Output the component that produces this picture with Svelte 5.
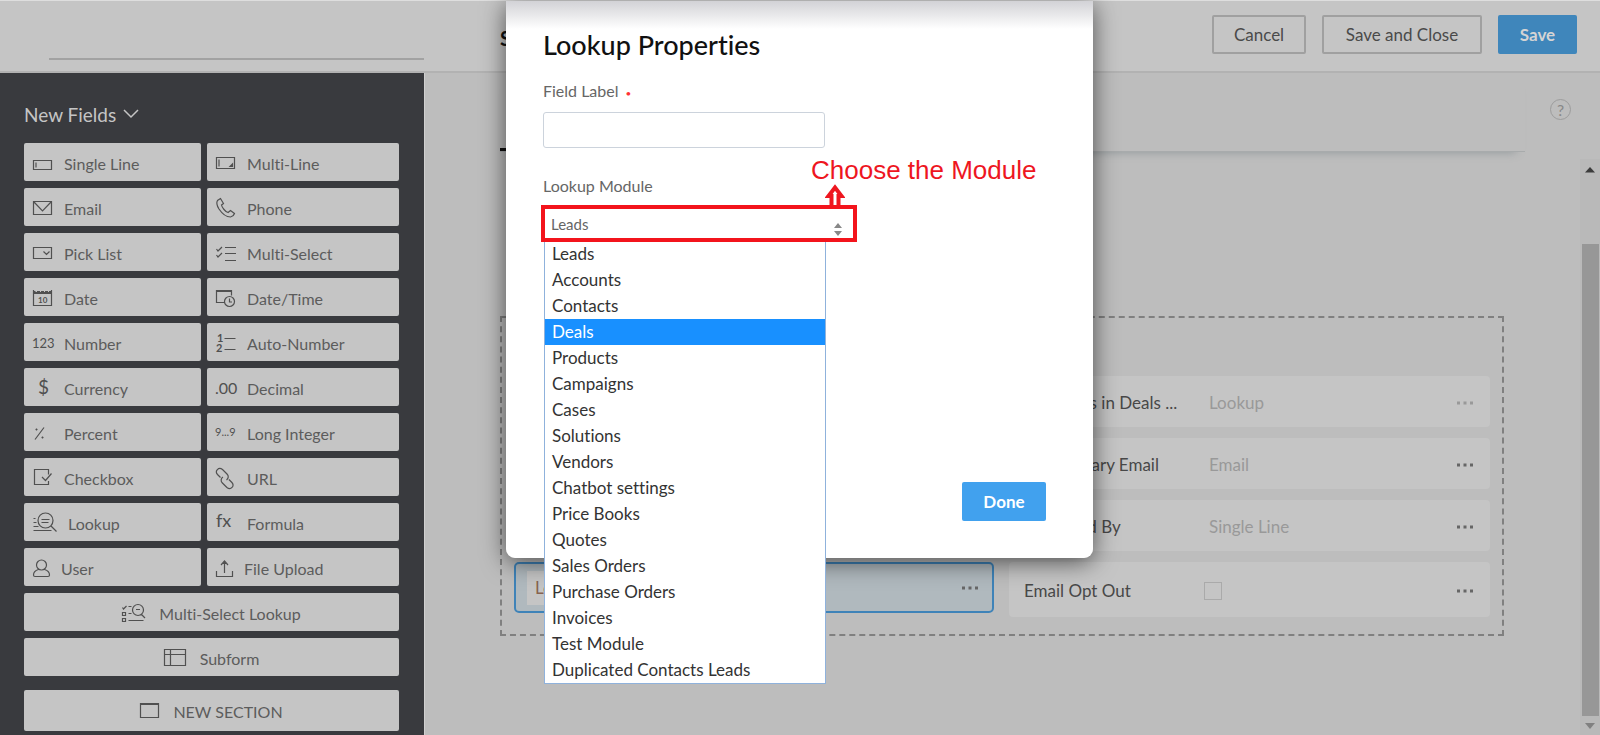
<script>
	const fields = [
		{ label: 'Single Line', icon: 'single' },
		{ label: 'Multi-Line', icon: 'multi' },
		{ label: 'Email', icon: 'email' },
		{ label: 'Phone', icon: 'phone' },
		{ label: 'Pick List', icon: 'pick' },
		{ label: 'Multi-Select', icon: 'multiselect' },
		{ label: 'Date', icon: 'date' },
		{ label: 'Date/Time', icon: 'datetime' },
		{ label: 'Number', icon: 'number' },
		{ label: 'Auto-Number', icon: 'auto' },
		{ label: 'Currency', icon: 'currency' },
		{ label: 'Decimal', icon: 'decimal' },
		{ label: 'Percent', icon: 'percent' },
		{ label: 'Long Integer', icon: 'long' },
		{ label: 'Checkbox', icon: 'checkbox' },
		{ label: 'URL', icon: 'url' },
		{ label: 'Lookup', icon: 'lookup' },
		{ label: 'Formula', icon: 'formula' },
		{ label: 'User', icon: 'user' },
		{ label: 'File Upload', icon: 'upload' }
	];

	const wideFields = [
		{ label: 'Multi-Select Lookup', icon: 'multilookup' },
		{ label: 'Subform', icon: 'subform' }
	];

	// w - width, d - strokes, t - [text, x, y, size]
	const icons = {
		single: { w: 20, d: 'M.5 10.5h18v9h-18z M3 12.5v5' },
		multi: { w: 20, d: 'M.5 7.5h18v11h-18z M3 9.5v7 M16.5 14v2.5h-2.5z' },
		email: { w: 20, d: 'M.5 6.5h18v13h-18z M1 7l8.5 9 8.5-9' },
		phone: { w: 20, d: 'M4.5 3.5L1.5 5.5C.3 7.5.8 10.5 3 14c3 4.5 7.5 8 11.5 8 2-.5 3.5-1.8 4-3.5l-4-3-2.5 2C9.5 17 6 12.5 5.5 10l2-1.5z' },
		pick: { w: 20, d: 'M.5 7.5h18v11h-18z M10.5 11.5l3 3 3-3' },
		multiselect: { w: 20, d: 'M9 7.5h11 M9 13.5h11 M9 20.5h11 M.5 9l1.5 2 4-4 M.5 15l1.5 2 4-4' },
		date: { w: 20, d: 'M.5 5v15.5h18V5 M.5 8.5h18 M1 6.5h1.5 M4 6.5h3 M8 6.5h3 M12 6.5h3 M16 6.5h2 M1 7.5h17', t: [['10', 5, 18, 8]], bold: true },
		datetime: { w: 20, d: 'M8.5 17.5h-8v-12h15v5 M.5 6.5h15 M8.5 16.5a5 5 0 1 0 10 0a5 5 0 1 0-10 0 M13.5 13.5v3.5h2.5' },
		number: { w: 20, t: [['123', -1, 18, 13]] },
		auto: { w: 20, d: 'M8.5 8.5h11 M8.5 19.5h11', t: [['1', 1, 12, 11], ['2', 0, 22, 11]], bold: true },
		currency: { w: 20, t: [['$', 5, 19, 19]] },
		decimal: { w: 20, t: [['.00', -1, 19, 16]] },
		percent: { w: 20, d: 'M2 19.5l9-12 M2.5 9.5h2 M3.5 8.5v2 M8.5 17.5h2 M9.5 16.5v2' },
		long: { w: 20, t: [['9...9', -1, 16, 11]] },
		checkbox: { w: 20, d: 'M15.5 16v3.5h-14v-15h14v5 M9 12l3.5 3.5 6-7' },
		url: { w: 20, d: 'M4.5 12.5l-3-3C-1.5 6 2.5 1.5 6.5 4.5l4.5 4.5c2 2 1.5 4.5-.5 6 M12.9 14.5l3 3c3 3.5-1 8-5 5l-4.5-4.5c-2-2-1.5-4.5.5-6' },
		lookup: { w: 24, d: 'M5 10.5a7.5 7.5 0 1 0 15 0a7.5 7.5 0 1 0-15 0 M18 16l5.5 5.5 M8.5 9.5h8 M8.5 12.5h7 M.5 8.5h2 M.5 12.5h3 M.5 16.5h5 M.5 20.5h18' },
		formula: { w: 20, t: [['fx', 0, 17, 18]] },
		user: { w: 17, d: 'M3.5 10a5 5 0 1 0 10 0a5 5 0 1 0-10 0 M5.5 14.5c-3.5 1-5 3-5 5.5q0 1.5 1.5 1.5h13q1.5 0 1.5-1.5c0-2.5-1.5-4.5-5-5.5' },
		upload: { w: 17, d: 'M.5 16v5.5h16V16 M8.5 18V7 M5 10l3.5-4 3.5 4 M7 8.5h3' },
		multilookup: { w: 23, d: 'M10.5 10a5.5 5.5 0 1 0 11 0a5.5 5.5 0 1 0-11 0 M19 14l4 4 M14 9.5h4 M.5 7.5l1 1.5 3-3 M6.5 6.5h3 M.5 12.5h3v3h-3z M6.5 13.5h3 M.5 18.5h3v3h-3z M6.5 20.5h15' },
		subform: { w: 22, d: 'M.5 4.5h21v16H.5z M.5 9.5h21 M6.5 4.5v16' },
		section: { w: 19, d: 'M.5 4.5h18v14H.5z M.5 5.5h18' }
	};

	const rows = [
		{ label: 'Prospects in Deals ...', value: 'Lookup', faded: true },
		{ label: '2nd Primary Email', value: 'Email' },
		{ label: 'Approved By', value: 'Single Line' },
		{ label: 'Email Opt Out', check: true }
	];

	const modules = [
		'Leads', 'Accounts', 'Contacts', 'Deals', 'Products', 'Campaigns',
		'Cases', 'Solutions', 'Vendors', 'Chatbot settings', 'Price Books',
		'Quotes', 'Sales Orders', 'Purchase Orders', 'Invoices',
		'Test Module', 'Duplicated Contacts Leads'
	];

	let fieldLabel = $state('');
	let selected = $state('Leads');
	let hovered = $state('Deals');
</script>

{#snippet icon(name)}
	{@const i = icons[name]}
	<svg class="icon" class:bold={i.bold} width={i.w} height="24" viewBox="0 0 {i.w} 24" aria-hidden="true">
		{#if i.d}<path d={i.d} />{/if}
		{#each i.t ?? [] as [text, x, y, size]}
			<text {x} {y} font-size={size}>{text}</text>
		{/each}
	</svg>
{/snippet}

{#snippet dots()}
	<svg width="18" height="4" viewBox="0 0 18 4" aria-hidden="true">
		<path d="M1 .5h3v3H1z M7.5 .5h3v3h-3z M14 .5h3v3h-3z" />
	</svg>
{/snippet}

<div class="page">
	<header>
		<div class="name"></div>
		<h1>Set</h1>
		<div class="actions">
			<button>Cancel</button>
			<button class="wide">Save and Close</button>
			<button class="save">Save</button>
		</div>
	</header>

	<div class="body">
		<aside>
			<button class="toggle">
				New Fields
				<svg width="16" height="10" viewBox="0 0 16 10"><path d="M1 1l7 7 7-7" /></svg>
			</button>
			<div class="fields">
				{#each fields as f}
					<button class="field">{@render icon(f.icon)}<span>{f.label}</span></button>
				{/each}
				{#each wideFields as f}
					<button class="field full">{@render icon(f.icon)}<span>{f.label}</span></button>
				{/each}
			</div>
			<button class="field full section">{@render icon('section')}<span>NEW SECTION</span></button>
		</aside>

		<main>
			<div class="top">
				<div class="tabs"><span class="tab"></span></div>
				<button class="help" aria-label="Help">?</button>
			</div>
			<div class="canvas">
				<div class="layout">
					<div class="card active">
						<input class="edit" aria-label="Field name" value="Lookup 1" />
						<button class="more" aria-label="More">{@render dots()}</button>
					</div>
					{#each rows as row}
						<div class="card" class:last={row.check}>
							{#if row.check}
								<label for="optout">{row.label}</label>
								<input id="optout" type="checkbox" />
							{:else}
								<span class="label">{row.label}</span>
								<span class="value">{row.value}</span>
							{/if}
							<button class="more" class:faded={row.faded} aria-label="More">{@render dots()}</button>
						</div>
					{/each}
				</div>
				<div class="scroll">
					<svg width="10" height="6" viewBox="0 0 10 6"><path d="M0 5.5L5 0l5 5.5z" fill="#3c3c3c" /></svg>
					<div class="thumb"></div>
					<svg width="10" height="6" viewBox="0 0 10 6"><path d="M0 0h10L5 6z" fill="#808080" /></svg>
				</div>
			</div>
		</main>
	</div>

	<div class="modal" role="dialog" aria-labelledby="title">
		<h2 id="title">Lookup Properties</h2>
		<label for="fieldLabel">Field Label <span class="req">•</span></label>
		<input id="fieldLabel" class="text" type="text" bind:value={fieldLabel} />
		<label for="module">Lookup Module</label>
		<div class="picker">
			<select id="module" bind:value={selected}>
				{#each modules as m}
					<option>{m}</option>
				{/each}
			</select>
			<svg class="sort" width="8" height="13" viewBox="0 0 8 13"><path d="M0 5l4-5 4 5z M0 8h8l-4 5z" /></svg>
			<ul role="listbox" aria-label="Modules">
				{#each modules as m}
					<li role="option" aria-selected={m === hovered} class:on={m === hovered} onmouseenter={() => (hovered = m)}>{m}</li>
				{/each}
			</ul>
			<div class="note">
				Choose the Module
				<svg width="20" height="25" viewBox="0 0 20 25"><path d="M6.5 25V13H3.5L10 4.5l6.5 8.5h-3V25" /></svg>
			</div>
		</div>
		<button class="done">Done</button>
	</div>
</div>

<style>
	:global(body) {
		background: #bdbdbd;
	}

	.page {
		position: relative;
		display: flex;
		flex-direction: column;
		min-height: 100vh;
		font-family: Lato, "Open Sans", sans-serif;
		font-size: 16px;
		font-variant-ligatures: none;
		color: #4a4a4a;
	}

	button, input, select {
		font: inherit;
		color: inherit;
		box-sizing: border-box;
	}

	button {
		padding: 0;
		border: 0;
		background: none;
	}

	header {
		display: flex;
		align-items: center;
		box-sizing: border-box;
		height: 73px;
		padding: 0 23px 3px 0;
		background: #c5c5c5;
		border-top: 1px solid #dedede;
		border-bottom: 2px solid #b2b2b2;
	}

	.name {
		width: 375px;
		height: 59px;
		margin-left: 49px;
		box-sizing: border-box;
		border-bottom: 2px solid #a2a2a2;
		align-self: flex-start;
	}

	h1 {
		flex: 1;
		margin: 6px 0 0 76px;
		font-size: 20px;
		color: #111;
	}

	.actions {
		display: flex;
		gap: 16px;
	}

	.actions button {
		width: 94px;
		height: 39px;
		border: 2px solid #a0a0a0;
		border-radius: 2px;
		font-size: 17px;
	}

	.actions .wide {
		width: 160px;
	}

	.actions .save {
		width: 79px;
		border: 0;
		background: #3f86bb;
		color: #d4d4d4;
		font-weight: bold;
	}

	.body {
		display: flex;
		flex: 1;
	}

	aside {
		box-sizing: border-box;
		width: 425px;
		padding: 28px 24px 4px;
		background: #393a3e;
		border-right: 1px solid #d0d0d0;
	}

	.toggle {
		display: flex;
		align-items: center;
		gap: 7px;
		height: 26px;
		margin-bottom: 16px;
		font-size: 19px;
		color: #c5c5c5;
	}

	.toggle path {
		fill: none;
		stroke: #c5c5c5;
		stroke-width: 1.5;
	}

	.fields {
		display: grid;
		grid-template-columns: 177px 192px;
		gap: 7px 6px;
	}

	.field {
		display: flex;
		align-items: center;
		gap: 11px;
		height: 38px;
		padding: 0 9px;
		border-radius: 2px;
		background: #c5c5c5;
		color: #5c5c5c;
		line-height: 24px;
	}

	.field span {
		padding-top: 3px;
	}

	.full {
		grid-column: 1 / 3;
		justify-content: center;
		gap: 14px;
	}

	.section {
		width: 375px;
		height: 41px;
		margin-top: 14px;
	}

	.icon {
		flex: none;
		overflow: visible;
	}

	.icon path {
		fill: none;
		stroke: #505050;
		stroke-width: 1.2;
	}

	.icon text {
		fill: #505050;
	}

	.bold text {
		font-weight: bold;
	}

	main {
		flex: 1;
		display: flex;
		flex-direction: column;
	}

	.top {
		display: flex;
		height: 79px;
		padding: 0 29px 0 75px;
	}

	.tabs {
		flex: 1;
		display: flex;
		align-items: flex-end;
		border-bottom: 1px solid #a8abac;
		box-shadow: 0 9px 9px -9px #8f9699;
	}

	.tab {
		width: 120px;
		height: 3px;
		background: #111;
	}

	.help {
		width: 21px;
		height: 21px;
		margin: 26px 0 0 25px;
		border: 1px solid #9c9c9c;
		border-radius: 50%;
		line-height: 18px;
		color: #888;
	}

	.canvas {
		flex: 1;
		display: flex;
		padding-top: 7px;
	}

	.layout {
		flex: 1;
		display: grid;
		grid-template-columns: 480px 1fr;
		grid-template-rows: 51px 51px 51px 55px;
		gap: 11px 15px;
		align-self: flex-start;
		box-sizing: border-box;
		height: 320px;
		margin: 157px 76px 0 75px;
		padding: 58px 12px 0;
		border: 2px dashed #808080;
	}

	.card {
		grid-column: 2;
		display: flex;
		align-items: center;
		padding: 2px 16px 0 15px;
		border-radius: 4px;
		background: #c5c5c5;
		color: #484848;
		font-size: 17px;
		box-sizing: border-box;
	}

	.active {
		grid-area: 4 / 1;
		height: 51px;
		padding: 0 13px 0 11px;
		border: 2px solid #3f83b8;
		border-radius: 5px;
		background: #b0b9be;
	}

	.edit {
		width: 150px;
		height: 34px;
		padding: 0 8px;
		border: 0;
		background: #c5c5c5;
		color: #876350;
	}

	.label {
		width: 185px;
	}

	.value {
		color: #999;
	}

	.last label {
		width: 180px;
	}

	.last input {
		appearance: none;
		width: 18px;
		height: 18px;
		margin: 0;
		border: 1px solid #aaa;
	}

	.more {
		display: flex;
		margin-left: auto;
	}

	.more path {
		fill: #666;
	}

	.more.faded path {
		fill: #999;
	}

	.scroll {
		display: flex;
		flex-direction: column;
		align-items: center;
		box-sizing: border-box;
		width: 20px;
		padding: 8px 0 6px;
		background: #b9b9b9;
	}

	.thumb {
		flex: 1;
		width: 17px;
		margin: 71px 0 7px;
		background: #979797;
	}

	.modal {
		position: absolute;
		top: 1px;
		left: calc(50% - 294px);
		box-sizing: border-box;
		width: 587px;
		height: 557px;
		padding: 30px 37px;
		border-radius: 0 0 9px 9px;
		background: linear-gradient(#d2d2d6, #fff 28px);
		box-shadow: 0 4px 24px rgba(0, 0, 0, 0.6);
		color: #666;
	}

	h2 {
		margin: 0 0 17px;
		font-size: 27px;
		font-weight: 500;
		line-height: 28px;
		color: #111;
	}

	.modal label {
		display: block;
		line-height: 30px;
	}

	.req {
		margin-left: 3px;
		font-size: 10px;
		line-height: 10px;
		color: #f33;
	}

	.text {
		display: block;
		width: 282px;
		height: 36px;
		margin: 6px 0 23px;
		border: 1px solid #ccd3dc;
		border-radius: 3px;
	}

	.picker {
		position: relative;
		width: 316px;
		height: 37px;
		margin: 4px 0 0 -2px;
	}

	select {
		position: relative;
		z-index: 1;
		appearance: none;
		width: 100%;
		height: 100%;
		padding: 0 6px;
		border: 4px solid #f3141c;
		border-radius: 0;
		background: #fff;
		font-size: 15px;
	}

	.sort {
		position: absolute;
		z-index: 1;
		top: 18px;
		right: 15px;
	}

	.sort path {
		fill: #888;
	}

	ul {
		position: absolute;
		top: 36px;
		left: 3px;
		box-sizing: border-box;
		width: 282px;
		margin: 0;
		padding: 0;
		list-style: none;
		background: #fff;
		border: 1px solid #8fb2dc;
		border-top: 0;
		color: #333;
	}

	li {
		padding-left: 7px;
		font-size: 17px;
		line-height: 26px;
	}

	.on {
		background: #1890ff;
		color: #fff;
	}

	.note {
		position: absolute;
		left: 270px;
		bottom: 34px;
		font: 26px/30px "Liberation Sans", Arial, sans-serif;
		white-space: nowrap;
		color: #ee161f;
	}

	.note svg {
		display: block;
		margin: -2px 0 0 14px;
	}

	.note path {
		fill: #fff;
		stroke: #ee161f;
		stroke-width: 4;
	}

	.done {
		position: absolute;
		right: 47px;
		bottom: 37px;
		width: 84px;
		height: 39px;
		border-radius: 2px;
		background: #41a1ee;
		font-size: 17px;
		font-weight: bold;
		color: #fff;
	}
</style>
